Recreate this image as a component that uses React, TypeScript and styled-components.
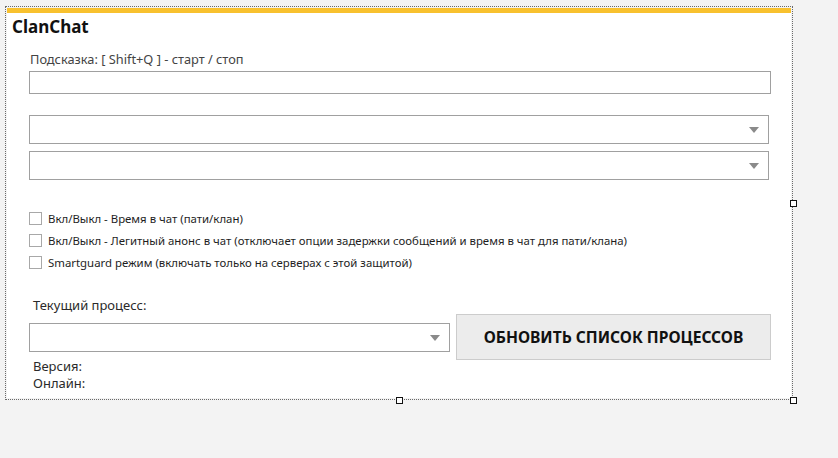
import styled, { createGlobalStyle } from "styled-components";

const GlobalStyle = createGlobalStyle`
  html, body {
    margin: 0;
    padding: 0;
    background: #f3f3f3;
    font-family: "Noto Sans", "Open Sans", sans-serif;
    color: #1e1e1e;
  }
`;

const Stage = styled.div`
  width: 838px;
  height: 458px;
  padding: 6px 0 0 5px;
  box-sizing: border-box;
`;

const Frame = styled.div`
  position: relative;
  width: 788px;
  height: 394px;
  box-sizing: border-box;
  border: 1px dotted #6a6a6a;
  padding: 1px;
`;

const Panel = styled.div`
  height: 100%;
  background: #ffffff;
  display: flex;
  flex-direction: column;
`;

const TopBar = styled.div`
  height: 5px;
  background: #f8c12f;
`;

const Title = styled.h1`
  margin: 3px 0 0 5px;
  font-size: 17px;
  line-height: 22px;
  font-weight: 700;
  color: #111;
`;

const Body = styled.div`
  display: flex;
  flex-direction: column;
  padding-left: 22px;
  width: 742px;
`;

const Hint = styled.div`
  margin: 13px 0 0 1px;
  font-size: 12.8px;
  line-height: 16px;
  color: #444;
`;

const TextBox = styled.div`
  margin-top: 4px;
  height: 23px;
  box-sizing: border-box;
  border: 1px solid #a0a0a0;
`;

const Combo = styled.div<{ $top: number; $width: number }>`
  margin-top: ${(p) => p.$top}px;
  width: ${(p) => p.$width}px;
  height: 29px;
  box-sizing: border-box;
  border: 1px solid #a0a0a0;
  display: flex;
  align-items: center;
  justify-content: flex-end;
  padding-right: 9px;
`;

const Arrow = styled.span`
  width: 0;
  height: 0;
  border-left: 5px solid transparent;
  border-right: 5px solid transparent;
  border-top: 6px solid #8a8a8a;
`;

const Checks = styled.div`
  margin-top: 27px;
  display: flex;
  flex-direction: column;
`;

const CheckRow = styled.label`
  display: flex;
  align-items: center;
  height: 22px;
  gap: 6px;
  font-size: 11.4px;
  color: #1e1e1e;
`;

const Box = styled.span`
  width: 13px;
  height: 13px;
  box-sizing: border-box;
  border: 1px solid #a8a8a8;
  background: #fff;
  flex-shrink: 0;
`;

const Label = styled.div`
  margin: 23px 0 0 4px;
  font-size: 13px;
  line-height: 18px;
  color: #2a2a2a;
`;

const Bottom = styled.div`
  display: flex;
  gap: 6px;
  align-items: flex-start;
`;

const LeftCol = styled.div`
  display: flex;
  flex-direction: column;
  padding-top: 9px;
`;

const Info = styled.div<{ $first?: boolean }>`
  margin: ${(p) => (p.$first ? "6px" : "0")} 0 0 4px;
  font-size: 13px;
  line-height: 17px;
  color: #2a2a2a;
`;

const RefreshButton = styled.button`
  width: 316px;
  height: 46px;
  box-sizing: border-box;
  border: 1px solid #cccccc;
  background: #ececec;
  font-family: "Noto Sans", "Open Sans", sans-serif;
  font-weight: 700;
  font-size: 15.6px;
  color: #111;
  padding: 0;
`;

const Handle = styled.span<{ $x: number; $y: number }>`
  position: absolute;
  left: ${(p) => p.$x}px;
  top: ${(p) => p.$y}px;
  width: 7px;
  height: 7px;
  box-sizing: border-box;
  border: 1px solid #111;
  background: #fff;
`;

const options = [
  "Вкл/Выкл - Время в чат (пати/клан)",
  "Вкл/Выкл - Легитный анонс в чат (отключает опции задержки сообщений и время в чат для пати/клана)",
  "Smartguard режим (включать только на серверах с этой защитой)",
];

export default function App() {
  return (
    <Stage>
      <GlobalStyle />
      <Frame>
        <Panel>
          <TopBar />
          <Title>ClanChat</Title>
          <Body>
            <Hint>Подсказка: [ Shift+Q ] - старт / стоп</Hint>
            <TextBox />
            <Combo $top={21} $width={740}>
              <Arrow />
            </Combo>
            <Combo $top={7} $width={740}>
              <Arrow />
            </Combo>
            <Checks>
              {options.map((o) => (
                <CheckRow key={o}>
                  <Box />
                  {o}
                </CheckRow>
              ))}
            </Checks>
            <Label>Текущий процесс:</Label>
            <Bottom>
              <LeftCol>
                <Combo $top={0} $width={421}>
                  <Arrow />
                </Combo>
                <Info $first>Версия:</Info>
                <Info>Онлайн:</Info>
              </LeftCol>
              <RefreshButton>ОБНОВИТЬ СПИСОК ПРОЦЕССОВ</RefreshButton>
            </Bottom>
          </Body>
        </Panel>
        <Handle $x={784} $y={193} />
        <Handle $x={390} $y={390} />
        <Handle $x={784} $y={390} />
      </Frame>
    </Stage>
  );
}
